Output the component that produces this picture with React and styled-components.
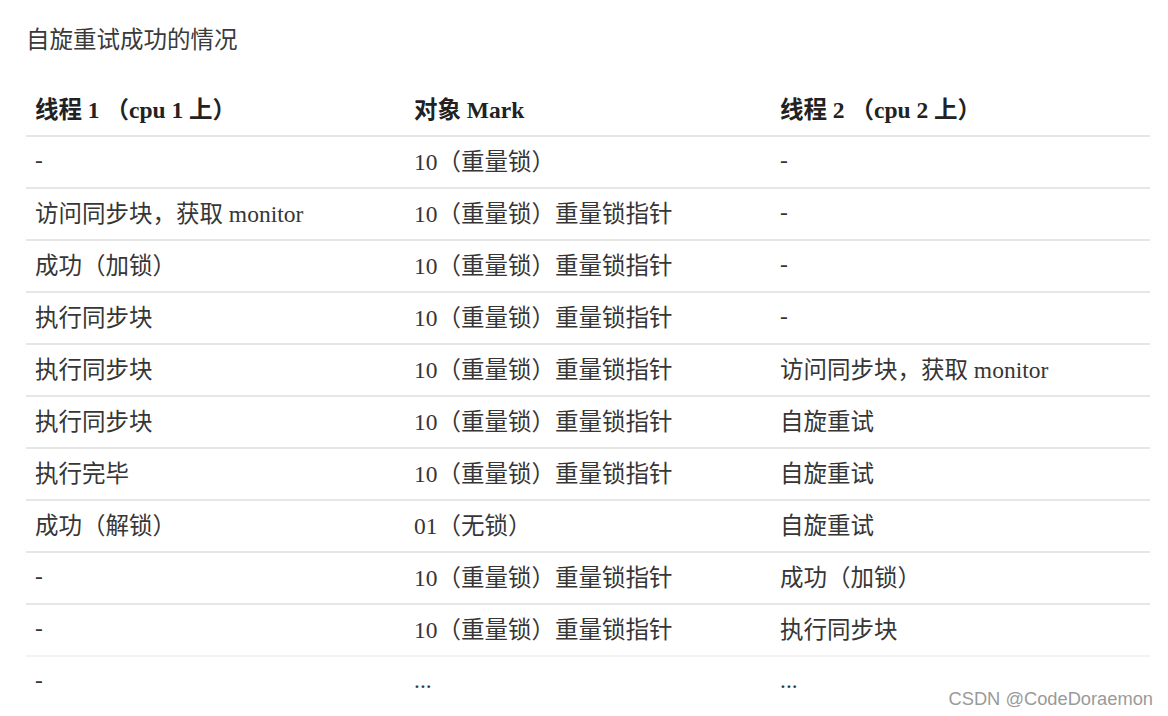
import React from 'react';
import styled, { createGlobalStyle } from 'styled-components';

const GlobalStyle = createGlobalStyle`
  html, body {
    margin: 0;
    padding: 0;
    background: #ffffff;
  }
`;

const Page = styled.div`
  position: relative;
  width: 1168px;
  height: 716px;
  overflow: hidden;
  padding-left: 26px;
  box-sizing: border-box;
  font-family: "Liberation Serif", "Noto Sans CJK SC", serif;
  color: #333333;
`;

const Title = styled.div`
  padding-top: 22px;
  line-height: 32px;
  font-size: 23.5px;
  font-family: "Noto Sans CJK SC", "Liberation Sans", sans-serif;
  color: #3a3a3a;
  margin-bottom: 31px;
`;

const Table = styled.div`
  width: 1124px;
  display: grid;
  grid-template-columns: 379px 366px 379px;
`;

const Row = styled.div`
  display: contents;
`;

const Cell = styled.div`
  height: 52px;
  box-sizing: border-box;
  display: flex;
  align-items: center;
  padding: 0 0 4px 9px;
  font-size: 23.5px;
  font-weight: ${p => (p.head ? 700 : 400)};
  color: ${p => (p.head ? '#222222' : '#363636')};
  border-bottom: 2px solid ${p => p.line};
  white-space: nowrap;
`;

const Watermark = styled.div`
  position: absolute;
  right: 15px;
  bottom: 6px;
  font-family: "Liberation Sans", "Noto Sans", sans-serif;
  font-size: 18.3px;
  color: #9a9a9a;
`;

const header = ['线程 1 （cpu 1 上）', '对象 Mark', '线程 2 （cpu 2 上）'];

const rows = [
  ['-', '10（重量锁）', '-'],
  ['访问同步块，获取 monitor', '10（重量锁）重量锁指针', '-'],
  ['成功（加锁）', '10（重量锁）重量锁指针', '-'],
  ['执行同步块', '10（重量锁）重量锁指针', '-'],
  ['执行同步块', '10（重量锁）重量锁指针', '访问同步块，获取 monitor'],
  ['执行同步块', '10（重量锁）重量锁指针', '自旋重试'],
  ['执行完毕', '10（重量锁）重量锁指针', '自旋重试'],
  ['成功（解锁）', '01（无锁）', '自旋重试'],
  ['-', '10（重量锁）重量锁指针', '成功（加锁）'],
  ['-', '10（重量锁）重量锁指针', '执行同步块'],
  ['-', '...', '...'],
];

// line colour per row: the one above the last is faint, the last has none
const lineFor = (ri) => {
  if (ri === rows.length - 1) return 'transparent';
  if (ri === rows.length - 2) return '#f3f3f3';
  return '#e6e6e6';
};

export default function App() {
  return (
    <Page>
      <GlobalStyle />
      <Title>自旋重试成功的情况</Title>
      <Table>
        <Row>
          {header.map((h, i) => (
            <Cell head line="#e6e6e6" key={i}>{h}</Cell>
          ))}
        </Row>
        {rows.map((r, ri) => (
          <Row key={ri}>
            {r.map((c, ci) => (
              <Cell key={ci} line={lineFor(ri)}>
                {c}
              </Cell>
            ))}
          </Row>
        ))}
      </Table>
      <Watermark>CSDN @CodeDoraemon</Watermark>
    </Page>
  );
}
